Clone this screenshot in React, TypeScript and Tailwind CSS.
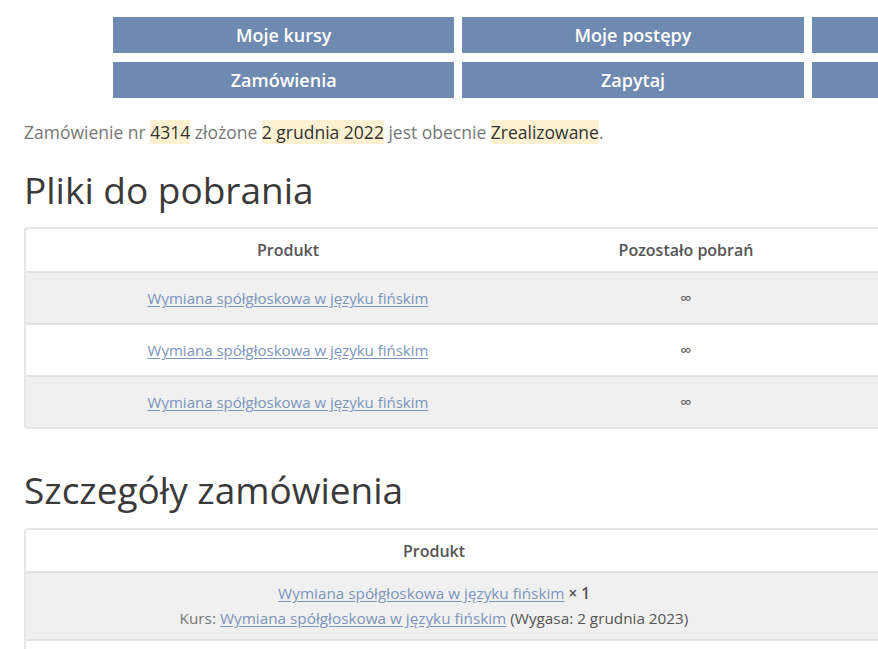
import React from "react";

const font = { fontFamily: '"Open Sans", "Noto Sans", sans-serif' };

const NAME = "Wymiana spółgłoskowa w języku fińskim";

function NavButton({ label }: { label: string }) {
  return (
    <a className="flex h-9 items-center justify-center bg-[#6f8ab0] text-[18px] font-semibold text-white">
      {label}
    </a>
  );
}

function Mark({ children }: { children: React.ReactNode }) {
  return <mark className="bg-[#fdf1d1] text-[#333]">{children}</mark>;
}

function ProductLink() {
  return (
    <a className="text-[#7b95bd] underline decoration-[#7b95bd] underline-offset-2">{NAME}</a>
  );
}

export default function App() {
  return (
    <div className="h-[649px] w-[878px] overflow-hidden bg-white" style={font}>
      <div className="w-[1200px] pl-6">
        {/* Account nav */}
        <div className="ml-[89px] mt-[17px] grid w-[1040px] grid-cols-3 gap-x-2 gap-y-[9px]">
          <NavButton label="Moje kursy" />
          <NavButton label="Moje postępy" />
          <NavButton label="" />
          <NavButton label="Zamówienia" />
          <NavButton label="Zapytaj" />
          <NavButton label="" />
        </div>

        <p className="mt-[21px] text-[17.5px] leading-[26px] text-[#777]">
          Zamówienie nr <Mark>4314</Mark> złożone <Mark>2 grudnia 2022</Mark> jest obecnie{" "}
          <Mark>Zrealizowane</Mark>.
        </p>

        <h2 className="mt-[21px] text-[37px] leading-[48px] text-[#3a3a3a]">Pliki do pobrania</h2>

        {/* Downloads table */}
        <div className="mt-[13px] w-[1100px] overflow-hidden rounded-[4px] border-2 border-[#e6e6e6] text-[15px]">
          <div className="flex h-[42px] items-center text-[16px] font-semibold text-[#555]">
            <div className="w-[524px] text-center">Produkt</div>
            <div className="w-[272px] text-center">Pozostało pobrań</div>
          </div>
          {[0, 1, 2].map((i) => (
            <div
              key={i}
              className={`flex h-[52px] items-center border-t-2 border-[#e2e2e2] ${
                i % 2 === 0 ? "bg-[#f0f0f0]" : "bg-white"
              }`}
            >
              <div className="w-[524px] text-center">
                <ProductLink />
              </div>
              <div className="w-[272px] text-center text-[16px] text-[#555]">∞</div>
            </div>
          ))}
        </div>

        <h2 className="mt-[37px] text-[37px] leading-[48px] text-[#3a3a3a]">Szczegóły zamówienia</h2>

        {/* Order details table */}
        <div className="mt-[14px] w-[1100px] overflow-hidden rounded-[4px] border-2 border-[#e6e6e6] text-[15.3px]">
          <div className="flex h-[41px] items-center text-[16px] font-semibold text-[#555]">
            <div className="w-[816px] text-center">Produkt</div>
          </div>
          <div className="flex h-[68px] items-center border-t-2 border-[#e2e2e2] bg-[#f0f0f0]">
            <div className="w-[816px] text-center leading-[25px] text-[#777]">
              <div>
                <ProductLink /> <strong className="font-semibold text-[#555]">× 1</strong>
              </div>
              <div>
                Kurs: <ProductLink />{" "}
                <span className="text-[#555]">(Wygasa: 2 grudnia 2023)</span>
              </div>
            </div>
          </div>
          <div className="h-[60px] border-t-2 border-[#e2e2e2] bg-white" />
        </div>
      </div>
    </div>
  );
}
